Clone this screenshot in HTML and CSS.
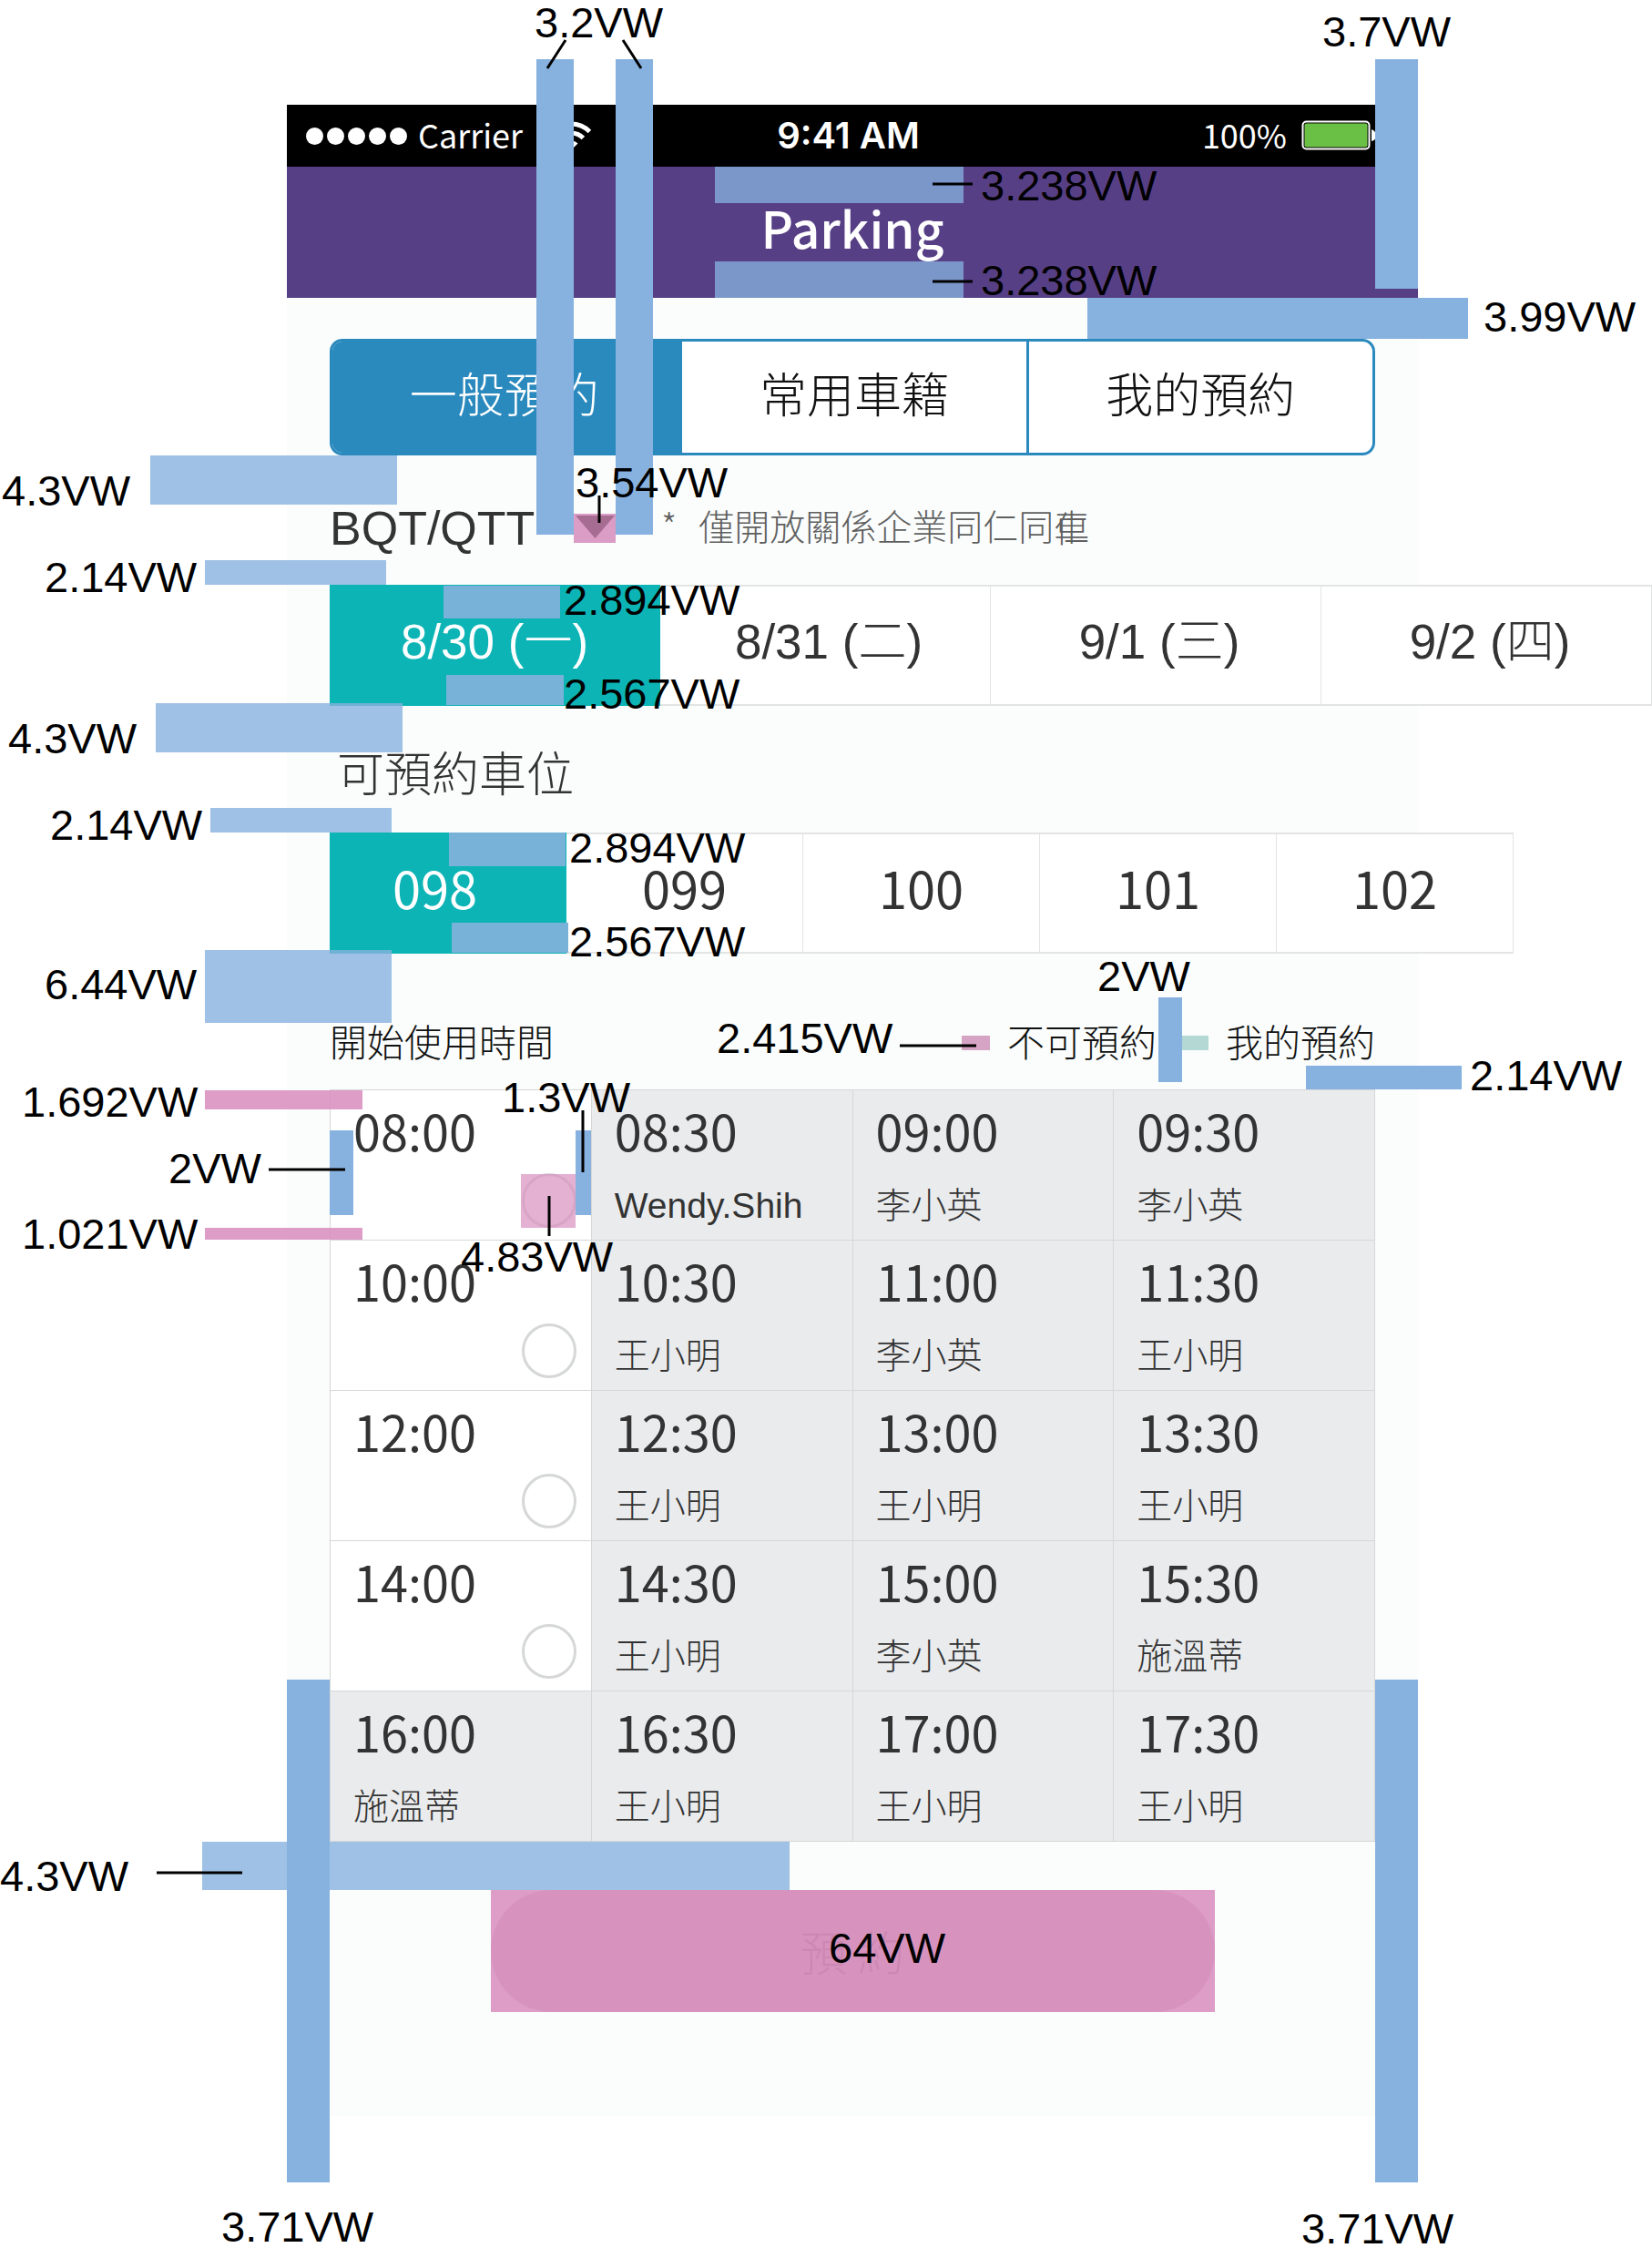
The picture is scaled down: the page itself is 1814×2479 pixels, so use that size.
FILE: index.html
```html
<!DOCTYPE html>
<html lang="zh-Hant">
<head>
<meta charset="utf-8">
<meta name="viewport" content="width=device-width, initial-scale=1">
<title>Parking</title>
<link rel="stylesheet" href="styles.css">
</head>
<body>
<main class="phone">
  <div class="status">
    <div class="status-left">
      <span class="dots"><i></i><i></i><i></i><i></i><i></i></span>
      <span>Carrier</span>
      <svg class="wifi" width="50" height="36" viewBox="0 0 50 36" aria-hidden="true">
        <g fill="none" stroke="#fff" stroke-width="5">
          <path d="M4.500 13.500A29 29 0 0 1 45.500 13.500"/>
          <path d="M11.600 20.600A19 19 0 0 1 38.400 20.600"/>
        </g>
        <path fill="#fff" d="M25 34L17.500 26.500A10.600 10.600 0 0 1 32.500 26.500Z"/>
      </svg>
    </div>
    <strong class="clock">9:41 AM</strong>
    <div class="status-right">
      <span>100%</span>
      <svg width="84" height="34" viewBox="0 0 84 34" aria-hidden="true">
        <rect x="1.500" y="1.500" width="73" height="30" rx="4" fill="none" stroke="#fff" stroke-width="2"/>
        <rect x="3.500" y="3.500" width="69" height="26" rx="2" fill="#6abf45"/>
        <path d="M77 10Q82 12 82 17T77 23Z" fill="#fff"/>
      </svg>
    </div>
  </div>
  <header class="bar"><h1>Parking</h1></header>
  <div class="content">
    <nav class="tabs">
      <button class="tab tab-on" type="button">一般預約</button>
      <button class="tab" type="button">常用車籍</button>
      <button class="tab" type="button">我的預約</button>
    </nav>
    <div class="site">
      <select class="site-select" aria-label="廠區"><option>BQT/QTT</option></select>
      <svg class="caret" width="46" height="32" viewBox="0 0 46 32" aria-hidden="true"><path d="M2 2H45L23.500 27Z" fill="#5a6a5a"/></svg>
      <p class="hint"><span>*</span><span>僅開放關係企業同仁同<span class="over">車<span class="over-top">仁</span></span></span></p>
    </div>
    <div class="strip">
      <button class="day on" type="button">8/30 (一)</button>
      <button class="day" type="button">8/31 (二)</button>
      <button class="day" type="button">9/1 (三)</button>
      <button class="day" type="button">9/2 (四)</button>
    </div>
    <h2>可預約車位</h2>
    <div class="strip">
      <button class="spot on" type="button">098</button>
      <button class="spot" type="button">099</button>
      <button class="spot" type="button">100</button>
      <button class="spot" type="button">101</button>
      <button class="spot" type="button">102</button>
    </div>
    <div class="legend">
      <h3>開始使用時間</h3>
      <span class="key"><i class="swatch swatch-taken"></i>不可預約</span>
      <span class="key"><i class="swatch swatch-mine"></i>我的預約</span>
    </div>
    <table class="times">
      <tbody>
        <tr>
          <td><label for="t0800">08:00</label><input type="radio" name="start" id="t0800"></td>
          <td class="taken"><b>08:30</b><span class="latin">Wendy.Shih</span></td>
          <td class="taken"><b>09:00</b><span>李小英</span></td>
          <td class="taken"><b>09:30</b><span>李小英</span></td>
        </tr>
        <tr>
          <td><label for="t1000">10:00</label><input type="radio" name="start" id="t1000"></td>
          <td class="taken"><b>10:30</b><span>王小明</span></td>
          <td class="taken"><b>11:00</b><span>李小英</span></td>
          <td class="taken"><b>11:30</b><span>王小明</span></td>
        </tr>
        <tr>
          <td><label for="t1200">12:00</label><input type="radio" name="start" id="t1200"></td>
          <td class="taken"><b>12:30</b><span>王小明</span></td>
          <td class="taken"><b>13:00</b><span>王小明</span></td>
          <td class="taken"><b>13:30</b><span>王小明</span></td>
        </tr>
        <tr>
          <td><label for="t1400">14:00</label><input type="radio" name="start" id="t1400"></td>
          <td class="taken"><b>14:30</b><span>王小明</span></td>
          <td class="taken"><b>15:00</b><span>李小英</span></td>
          <td class="taken"><b>15:30</b><span>施溫蒂</span></td>
        </tr>
        <tr>
          <td class="taken"><b>16:00</b><span>施溫蒂</span></td>
          <td class="taken"><b>16:30</b><span>王小明</span></td>
          <td class="taken"><b>17:00</b><span>王小明</span></td>
          <td class="taken"><b>17:30</b><span>王小明</span></td>
        </tr>
      </tbody>
    </table>
    <div class="submit-box"><button class="submit" type="button">預 約</button></div>
  </div>
</main>

<!-- Spacing guides laid over the screen -->
<svg class="guides" aria-hidden="true">
  <g class="g-header">
    <rect x="785" y="183" width="273" height="40"/>
    <rect x="785" y="287" width="273" height="40"/>
  </g>
  <g class="g-cell">
    <rect x="487" y="643" width="128" height="36"/>
    <rect x="490" y="741" width="129" height="33"/>
    <rect x="493" y="914" width="128" height="37"/>
    <rect x="496" y="1013" width="128" height="33"/>
  </g>
  <g class="g-light">
    <rect x="165" y="500" width="271" height="54"/>
    <rect x="225" y="615" width="199" height="27"/>
    <rect x="171" y="772" width="271" height="54"/>
    <rect x="231" y="887" width="199" height="27"/>
    <rect x="225" y="1043" width="205" height="80"/>
    <rect x="222" y="2022" width="645" height="53"/>
  </g>
  <g class="g-blue">
    <rect x="589" y="65" width="41" height="522"/>
    <rect x="676" y="65" width="41" height="522"/>
    <rect x="1510" y="65" width="47" height="252"/>
    <rect x="1194" y="327" width="418" height="45"/>
    <rect x="1272" y="1095" width="26" height="93"/>
    <rect x="1434" y="1170" width="171" height="26"/>
    <rect x="362" y="1241" width="26" height="93"/>
    <rect x="632" y="1241" width="17" height="93"/>
    <rect x="315" y="1844" width="47" height="552"/>
    <rect x="1510" y="1844" width="47" height="552"/>
  </g>
  <g class="g-pink">
    <rect x="630" y="564" width="46" height="32" class="g-clear"/>
    <rect x="225" y="1197" width="173" height="21"/>
    <rect x="225" y="1348" width="173" height="13"/>
    <rect x="572" y="1289" width="60" height="59" class="g-faint"/>
    <rect x="539" y="2075" width="795" height="134"/>
  </g>
  <path class="g-lines" d="M621 44L601 75M684 44L704 75M1024 202H1068M1024 309H1068M658 544V574M988 1148H1072M295 1284H379M640 1219V1287M603 1313V1357M172 2056H266"/>
</svg>
<div class="notes">
  <span class="n1">3.2VW</span>
  <span class="n2">3.7VW</span>
  <span class="n3">3.238VW</span>
  <span class="n4">3.238VW</span>
  <span class="n5">3.99VW</span>
  <span class="n6">4.3VW</span>
  <span class="n7">3.54VW</span>
  <span class="n8">2.14VW</span>
  <span class="n9">2.894VW</span>
  <span class="n10">2.567VW</span>
  <span class="n11">4.3VW</span>
  <span class="n12">2.14VW</span>
  <span class="n13">2.894VW</span>
  <span class="n14">2.567VW</span>
  <span class="n15">6.44VW</span>
  <span class="n16">2VW</span>
  <span class="n17">2.415VW</span>
  <span class="n18">2.14VW</span>
  <span class="n19">1.692VW</span>
  <span class="n20">1.3VW</span>
  <span class="n21">2VW</span>
  <span class="n22">1.021VW</span>
  <span class="n23">4.83VW</span>
  <span class="n24">4.3VW</span>
  <span class="n25">64VW</span>
  <span class="n26">3.71VW</span>
  <span class="n27">3.71VW</span>
</div>
</body>
</html>
```
FILE: styles.css
```css
* { box-sizing: border-box; }

body {
  position: relative;
  margin: 0;
  padding: 115px 257px 156px 315px;
  background: #fff;
  color: #333;
  font-family: "Noto Sans CJK TC", sans-serif;
  font-weight: 300;
}

h1, h2, h3, p { margin: 0; font-weight: 300; }

button, select {
  margin: 0;
  padding: 0;
  border: 0;
  background: none;
  color: inherit;
  font: inherit;
}

.phone { background: #fafdfc; }

/* Status bar */
.status {
  display: grid;
  grid-template-columns: 1fr auto 1fr;
  align-items: center;
  height: 68px;
  padding: 0 44px 0 21px;
  background: #000;
  color: #fff;
  font-size: 36px;
  font-weight: 400;
  line-height: 48px;
}
.status-left, .status-right { display: flex; align-items: center; }
.status-left { gap: 12px; }
.status-right { justify-content: flex-end; gap: 16px; }
.status-left > span, .status-right > span { padding-bottom: 4px; }
.dots { display: flex; gap: 4px; }
.status-left > .dots { padding: 0; }
.dots i { width: 19px; height: 19px; border-radius: 50%; background: #fff; }
.wifi { margin-left: 16px; }
.clock { margin-left: 14px; font: 600 40px/48px Inter, sans-serif; }

/* Title bar */
.bar {
  padding: 34px 0 46px;
  background: #573f86;
  color: #fff;
  text-align: center;
}
.bar h1 { font-size: 55px; font-weight: 500; line-height: 64px; }

.content { padding: 45px 47px 114px; }

/* Tabs */
.tabs {
  display: flex;
  height: 128px;
  overflow: hidden;
  border: 3px solid #2a89bd;
  border-radius: 14px;
  background: #fff;
  color: #111;
  font-size: 52px;
  line-height: 60px;
}
.tab { flex: 1; padding-bottom: 10px; }
.tab + .tab { border-left: 3px solid #2a89bd; }
.tab-on { padding-right: 4px; background: #2a89bd; color: #fff; }

/* Site picker */
.site { display: flex; align-items: center; height: 60px; margin: 50px 0 32px; }
.site-select {
  width: 268px;
  height: 60px;
  appearance: none;
  font: 400 52px/60px "Liberation Sans", sans-serif;
}
.caret { flex: none; }
.hint { display: flex; gap: 24px; margin-left: 50px; padding-bottom: 8px; color: #606060; font-size: 39px; line-height: 60px; white-space: nowrap; }
.over { position: relative; }
.over-top { position: absolute; left: 0; top: 0; line-height: 60px; }

.strip { display: flex; width: max-content; height: 133px; }
.strip button { padding-bottom: 8px; border: solid #e3e4e4; border-width: 2px 1px 2px 0; background: #fff; }
.strip .on { border-color: #0cb4b6; background: #0cb4b6; color: #fff; }
.strip .day { width: 363px; font: 300 53px/60px "Liberation Sans", "Noto Sans CJK TC", sans-serif; }
.strip .day:not(.on) { padding-left: 8px; }
.strip .spot { width: 260px; padding-bottom: 14px; font-size: 56px; font-weight: 400; line-height: 64px; }
.strip .spot.on { padding-right: 28px; }

h2 { margin: 42px 0 37px; padding-left: 8px; font-size: 52px; line-height: 60px; }

/* Legend */
.legend { display: flex; align-items: center; gap: 26px; height: 48px; margin: 74px 0 27px; color: #111; font-size: 41px; line-height: 48px; }
.legend h3 { margin: -6px auto 0 0; font-size: 41px; line-height: 48px; }
.key { display: flex; align-items: center; gap: 19px; margin-top: -6px; }
.swatch { width: 31px; height: 16px; margin-top: 6px; }
.swatch-taken { background: #d5a3c4; }
.swatch-mine { background: #b4d8d3; }

/* Time table */
.times { width: 100%; border-collapse: collapse; table-layout: fixed; background: #fff; }
.times td {
  height: 165px;
  padding: 12px 16px 12px 25px;
  border: 1px solid #d6d7d8;
  vertical-align: top;
  font-size: 39px;
  line-height: 48px;
}
.times .taken { background: #eaebed; }
.times b, .times label { display: block; font-size: 54px; font-weight: 400; line-height: 64px; }
.times span { display: block; margin-top: 23px; }
.times .latin { padding-top: 6px; font-family: "Liberation Sans", sans-serif; font-weight: 400; line-height: 44px; }
.times input {
  display: block;
  width: 60px;
  height: 60px;
  margin: 15px 0 0 auto;
  appearance: none;
  border: 3px solid #d6d7d8;
  border-radius: 50%;
}

/* Submit */
.submit-box { display: flex; justify-content: center; margin-top: 53px; }
.submit {
  width: 795px;
  height: 134px;
  border-radius: 67px;
  background: #c8afb7;
  color: #75555a;
  font-size: 52px;
  line-height: 60px;
}

/* Measurement overlay */
.guides { position: absolute; left: 0; top: 0; width: 100%; height: 100%; pointer-events: none; }
.g-blue { fill: #87b1df; }
.g-header { fill: #7b97c9; }
.g-cell { fill: #79b2d8; }
.g-light { fill: rgba(135, 177, 223, 0.8); }
.g-pink { fill: rgba(216, 144, 191, 0.88); }
.g-clear { fill: rgba(203, 109, 172, 0.68); }
.g-faint { fill: rgba(216, 144, 191, 0.7); }
.g-lines { fill: none; stroke: #000; stroke-width: 3; }
.notes span { position: absolute; color: #000; font: 400 47px/50px "Liberation Sans", sans-serif; white-space: nowrap; }
.n1 { left: 587px; top: 0; }
.n2 { left: 1452px; top: 10px; }
.n3 { left: 1077px; top: 179px; }
.n4 { left: 1077px; top: 283px; }
.n5 { left: 1629px; top: 323px; }
.n6 { left: 2px; top: 514px; }
.n7 { left: 632px; top: 505px; }
.n8 { left: 49px; top: 609px; }
.n9 { left: 619px; top: 634px; }
.n10 { left: 619px; top: 737px; }
.n11 { left: 9px; top: 786px; }
.n12 { left: 55px; top: 881px; }
.n13 { left: 625px; top: 906px; }
.n14 { left: 625px; top: 1009px; }
.n15 { left: 49px; top: 1056px; }
.n16 { left: 1205px; top: 1047px; }
.n17 { left: 787px; top: 1115px; }
.n18 { left: 1614px; top: 1156px; }
.n19 { left: 24px; top: 1185px; }
.n20 { left: 551px; top: 1180px; }
.n21 { left: 185px; top: 1258px; }
.n22 { left: 24px; top: 1330px; }
.n23 { left: 506px; top: 1355px; }
.n24 { left: 0; top: 2035px; }
.n25 { left: 910px; top: 2114px; }
.n26 { left: 243px; top: 2420px; }
.n27 { left: 1429px; top: 2422px; }
```
